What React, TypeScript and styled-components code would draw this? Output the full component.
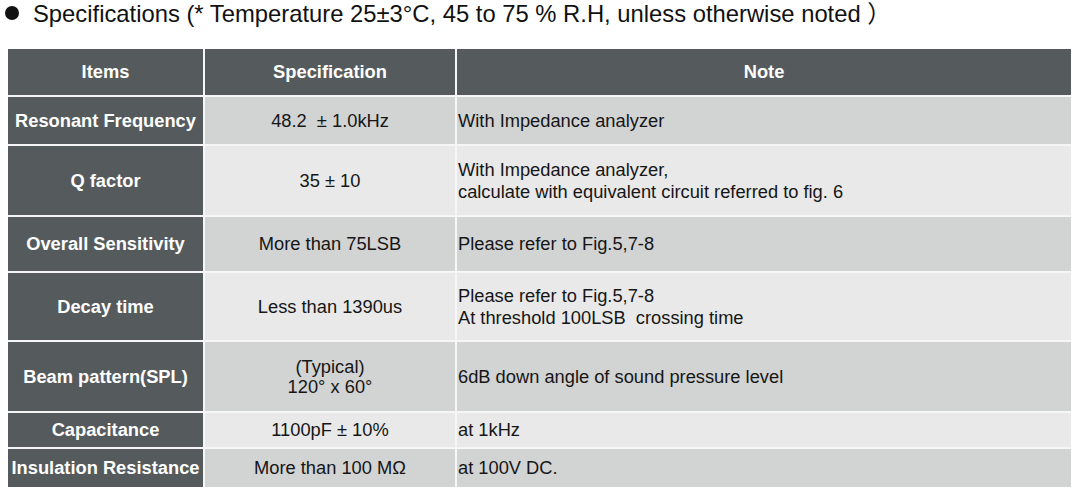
import React from "react";
import styled, { createGlobalStyle } from "styled-components";

const Global = createGlobalStyle`
  html, body { margin: 0; padding: 0; background: #ffffff; }
  body { font-family: "Liberation Sans", Arial, "Noto Sans CJK SC", sans-serif; color: #111; }
`;

const Page = styled.div`
  width: 1080px;
  height: 504px;
  box-sizing: border-box;
  padding: 0 9px 0 8px;
  display: flex;
  flex-direction: column;
`;

const Title = styled.div`
  display: flex;
  align-items: center;
  gap: 14px;
  height: 26px;
  margin-bottom: 23px;
  font-size: 23.8px;
  color: #111;
  white-space: nowrap;
  font-family: "Liberation Sans", Arial, "Noto Sans CJK SC", sans-serif;
`;

const TitleText = styled.span`
  display: block;
  line-height: 26px;
  padding-top: 1px;
`;

const Bullet = styled.span`
  width: 14px;
  height: 14px;
  border-radius: 50%;
  background: #111;
  margin-left: -3px;
  flex: none;
`;

const Table = styled.div`
  display: grid;
  grid-template-columns: 195px 250px 1fr;
  grid-template-rows: 46px 47px 69px 54px 67px 69px 34px 38px;
  gap: 2px;
  background: #f6f6f6;
`;

const Head = styled.div`
  background: #555b5d;
  color: #fff;
  font-weight: bold;
  font-size: 18.3px;
  display: flex;
  align-items: center;
  justify-content: center;
`;

const Item = styled.div`
  background: #555b5d;
  color: #fff;
  font-weight: bold;
  font-size: 18.3px;
  display: flex;
  align-items: center;
  justify-content: center;
  text-align: center;
  white-space: nowrap;
`;

const Cell = styled.div<{ $shade: boolean; $center?: boolean }>`
  background: ${(p) => (p.$shade ? "#d2d3d3" : "#e9e9e9")};
  color: #161616;
  font-size: 18.3px;
  line-height: ${(p) => (p.$center ? "20px" : "22px")};
  display: flex;
  flex-direction: column;
  justify-content: center;
  align-items: ${(p) => (p.$center ? "center" : "flex-start")};
  text-align: ${(p) => (p.$center ? "center" : "left")};
  padding-left: ${(p) => (p.$center ? "0" : "1px")};
  white-space: nowrap;
`;

const rows: { item: string; spec: string[]; note: string[] }[] = [
  { item: "Resonant Frequency", spec: ["48.2\u00a0\u00a0± 1.0kHz"], note: ["With Impedance analyzer"] },
  {
    item: "Q factor",
    spec: ["35 ± 10"],
    note: ["With Impedance analyzer,", "calculate with equivalent circuit referred to fig. 6"],
  },
  { item: "Overall Sensitivity", spec: ["More than 75LSB"], note: ["Please refer to Fig.5,7-8"] },
  {
    item: "Decay time",
    spec: ["Less than 1390us"],
    note: ["Please refer to Fig.5,7-8", "At threshold 100LSB\u00a0\u00a0crossing time"],
  },
  { item: "Beam pattern(SPL)", spec: ["(Typical)", "120° x 60°"], note: ["6dB down angle of sound pressure level"] },
  { item: "Capacitance", spec: ["1100pF ± 10%"], note: ["at 1kHz"] },
  { item: "Insulation Resistance", spec: ["More than 100 MΩ"], note: ["at 100V DC."] },
];

export default function App() {
  return (
    <>
      <Global />
      <Page>
        <Title>
          <Bullet />
          <TitleText>Specifications (* Temperature 25±3°C, 45 to 75 % R.H, unless otherwise noted ）</TitleText>
        </Title>
        <Table>
          <Head>Items</Head>
          <Head>Specification</Head>
          <Head>Note</Head>
          {rows.map((r, i) => (
            <React.Fragment key={r.item}>
              <Item>{r.item}</Item>
              <Cell $shade={i % 2 === 0} $center>
                {r.spec.map((s) => (
                  <span key={s}>{s}</span>
                ))}
              </Cell>
              <Cell $shade={i % 2 === 0}>
                {r.note.map((n) => (
                  <span key={n}>{n}</span>
                ))}
              </Cell>
            </React.Fragment>
          ))}
        </Table>
      </Page>
    </>
  );
}
